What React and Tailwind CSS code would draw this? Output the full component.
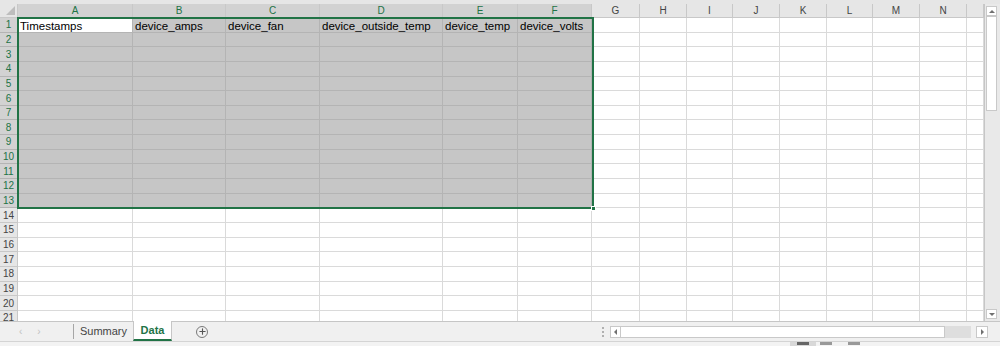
import { Plus } from "lucide-react";

const COLS = [
  { k: "A", w: "w-[115px]", sel: true },
  { k: "B", w: "w-[93px]", sel: true },
  { k: "C", w: "w-[94px]", sel: true },
  { k: "D", w: "w-[123px]", sel: true },
  { k: "E", w: "w-[75px]", sel: true },
  { k: "F", w: "w-[74px]", sel: true },
  { k: "G", w: "w-[48px]" },
  { k: "H", w: "w-[47px]" },
  { k: "I", w: "w-[46px]" },
  { k: "J", w: "w-[47px]" },
  { k: "K", w: "w-[47px]" },
  { k: "L", w: "w-[46px]" },
  { k: "M", w: "w-[47px]" },
  { k: "N", w: "w-[47px]" },
  { k: "", w: "w-[17px]" },
];

const HEADERS = ["Timestamps", "device_amps", "device_fan", "device_outside_temp", "device_temp", "device_volts"];

const ROWS = Array.from({ length: 21 }, (_, i) => i + 1);

function Cell({ col, row }) {
  const inSel = col.sel && row <= 13;
  const active = col.k === "A" && row === 1;
  const text = row === 1 && col.sel ? HEADERS["ABCDEF".indexOf(col.k)] : "";
  let cls = "border-r border-b border-[#dadada] bg-white";
  if (inSel) cls = "border-r border-b border-[#b4b4b4] bg-[#c6c6c6]";
  if (active) cls = "border-r border-b border-[#b4b4b4] bg-white";
  return (
    <div className={`${col.w} ${cls} flex h-full shrink-0 items-end overflow-hidden whitespace-nowrap pl-[2px] text-[11.5px] leading-[11px] text-black`}>
      {text}
    </div>
  );
}

export default function App() {
  return (
    <div
      className="flex h-[346px] w-[1000px] flex-col overflow-hidden bg-[#e6e6e6]"
      style={{ fontFamily: '"Liberation Sans", Arial, sans-serif' }}
    >
      <div className="h-[4px] shrink-0 bg-[#e6e6e6]" />
      <div className="flex min-h-0 flex-1">
        {/* grid */}
        <div className="relative w-[984px] shrink-0 overflow-hidden bg-white">
          <div className="flex h-[14px] bg-[#e6e6e6]">
            <div className="relative h-full w-[18px] shrink-0 border-r border-b border-[#c8c8c8]">
              <div className="absolute bottom-[2px] right-[2px] h-0 w-0 border-b-[9px] border-l-[9px] border-b-[#bdbdbd] border-l-transparent" />
            </div>
            {COLS.map((c, i) => (
              <div
                key={i}
                className={`${c.w} flex shrink-0 items-center justify-center border-r border-[#c8c8c8] text-[10px] ${
                  c.sel ? "border-b border-b-[#217346] bg-[#d2d2d2] text-[#217346]" : "border-b border-b-[#c8c8c8] text-[#444]"
                }`}
              >
                {c.k}
              </div>
            ))}
          </div>
          {ROWS.map((r) => (
            <div key={r} className="flex h-[14.65px]">
              <div
                className={`flex h-full w-[18px] shrink-0 items-center justify-center border-b border-r text-[10px] ${
                  r <= 13
                    ? "border-b-[#b4b4b4] border-r-[#217346] bg-[#d2d2d2] text-[#217346]"
                    : "border-b-[#c8c8c8] border-r-[#c8c8c8] bg-[#e6e6e6] text-[#444]"
                }`}
              >
                {r}
              </div>
              {COLS.map((c, i) => (
                <Cell key={i} col={c} row={r} />
              ))}
            </div>
          ))}
          {/* selection outline */}
          <div className="pointer-events-none absolute left-[17px] top-[13px] h-[192px] w-[577px] border-2 border-[#217346]" />
          <div className="pointer-events-none absolute left-[591px] top-[202px] h-[5px] w-[5px] border border-white bg-[#217346]" />
        </div>
        {/* vertical scrollbar */}
        <div className="flex w-[16px] shrink-0 flex-col border-l border-[#c6c6c6] bg-[#e9e9e9] pr-[2px]">
          <div className="mx-[1px] mt-[2px] flex h-[10px] items-center justify-center border border-[#c9c9c9] bg-white">
            <div className="h-0 w-0 border-x-[3px] border-b-[3px] border-x-transparent border-b-[#707070]" />
          </div>
          <div className="mx-[1px] h-[95px] border border-[#c9c9c9] bg-white" />
          <div className="flex-1" />
          <div className="mx-[1px] mb-[2px] flex h-[10px] items-center justify-center border border-[#c9c9c9] bg-white">
            <div className="h-0 w-0 border-x-[3px] border-t-[3px] border-x-transparent border-t-[#707070]" />
          </div>
        </div>
      </div>
      {/* sheet tabs */}
      <div className="flex h-[20px] shrink-0 items-stretch border-t border-[#c6c6c6] bg-[#f0f0f0] text-[11px]">
        <div className="flex w-[73px] shrink-0 items-center gap-[15px] pl-[19px] text-[10px] text-[#c2c2c2]">
          <span>‹</span>
          <span>›</span>
        </div>
        <div className="my-[2px] w-px bg-[#a6a6a6]" />
        <div className="flex w-[59px] items-center justify-center text-[#444]">Summary</div>
        <div className="-mt-px flex w-[39px] items-center justify-center border-x border-b-2 border-x-[#c6c6c6] border-b-[#217346] bg-white font-bold text-[#217346]">
          Data
        </div>
        <div className="flex w-[60px] items-center justify-center">
          <div className="flex h-[12px] w-[12px] items-center justify-center rounded-full border border-[#7a7a7a]">
            <Plus className="h-[9px] w-[9px] text-[#555]" strokeWidth={3} />
          </div>
        </div>
        <div className="flex-1" />
        <div className="flex w-[10px] flex-col items-center justify-center gap-[2px]">
          <span className="h-[2px] w-[2px] bg-[#b0b0b0]" />
          <span className="h-[2px] w-[2px] bg-[#b0b0b0]" />
          <span className="h-[2px] w-[2px] bg-[#b0b0b0]" />
        </div>
        <div className="ml-[2px] mr-[10px] flex w-[378px] items-center">
          <div className="flex h-[12px] w-[11px] items-center justify-center border border-[#c9c9c9] bg-white">
            <div className="h-0 w-0 border-y-[3px] border-r-[3px] border-y-transparent border-r-[#707070]" />
          </div>
          <div className="h-[12px] w-[324px] border-y border-r border-[#c9c9c9] bg-white" />
          <div className="h-[12px] flex-1 bg-[#dedede]" />
          <div className="ml-[5px] flex h-[12px] w-[12px] items-center justify-center border border-[#c9c9c9] bg-white">
            <div className="h-0 w-0 border-y-[3px] border-l-[3px] border-y-transparent border-l-[#707070]" />
          </div>
        </div>
        <div className="w-[2px]" />
      </div>
      {/* status bar */}
      <div className="flex h-[5px] shrink-0 items-start border-t border-[#d4d4d4] bg-[#f3f3f3]">
        <div className="ml-[790px] h-full w-[26px] bg-[#d8d8d8]">
          <div className="mx-auto h-[3px] w-[12px] bg-[#666]" />
        </div>
        <div className="ml-[4px] h-[3px] w-[12px] bg-[#999]" />
        <div className="ml-[16px] h-[3px] w-[12px] bg-[#999]" />
      </div>
    </div>
  );
}
